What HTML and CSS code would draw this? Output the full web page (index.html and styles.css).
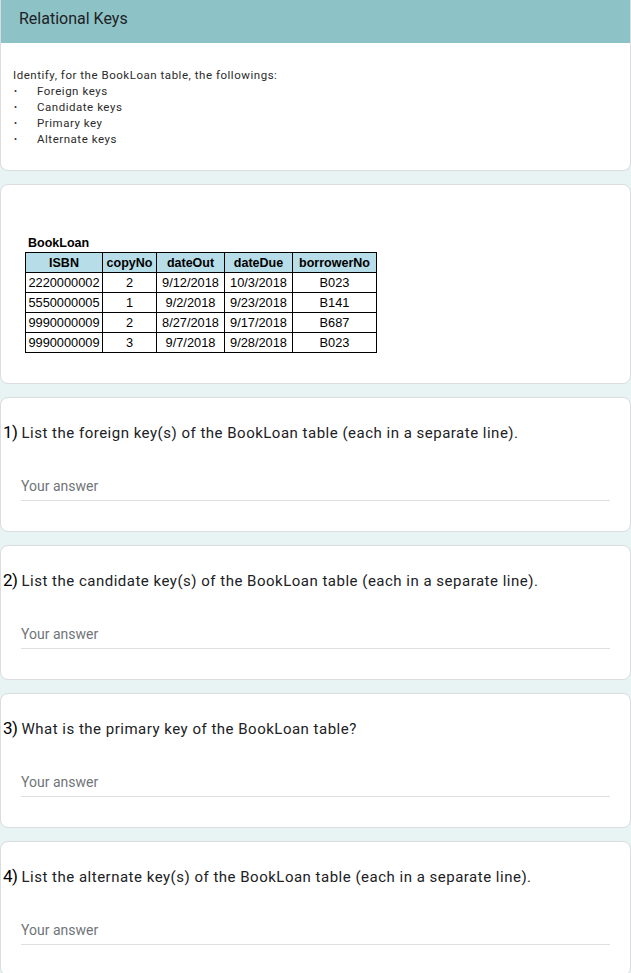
FILE: index.html
```html
<!DOCTYPE html>
<html lang="en">
<head>
<meta charset="utf-8">
<title>Relational Keys</title>
<link rel="stylesheet" href="styles.css">
</head>
<body>
<div class="page">
  <section class="card card-intro">
    <header class="intro-head"><h1 class="form-title">Relational Keys</h1></header>
    <div class="intro-body">
      <p class="intro-text">Identify, for the BookLoan table, the followings:</p>
      <ul class="intro-list">
        <li><span class="dot">•</span><span>Foreign keys</span></li>
        <li><span class="dot">•</span><span>Candidate keys</span></li>
        <li><span class="dot">•</span><span>Primary key</span></li>
        <li><span class="dot">•</span><span>Alternate keys</span></li>
      </ul>
    </div>
  </section>

  <section class="card card-table">
    <div class="sheet">
      <div class="sheet-title">BookLoan</div>
      <table class="sheet-table">
        <colgroup>
          <col class="c-isbn"><col class="c-copy"><col class="c-out"><col class="c-due"><col class="c-borrower">
        </colgroup>
        <thead>
          <tr><th>ISBN</th><th>copyNo</th><th>dateOut</th><th>dateDue</th><th>borrowerNo</th></tr>
        </thead>
        <tbody>
          <tr><td>2220000002</td><td>2</td><td>9/12/2018</td><td>10/3/2018</td><td>B023</td></tr>
          <tr><td>5550000005</td><td>1</td><td>9/2/2018</td><td>9/23/2018</td><td>B141</td></tr>
          <tr><td>9990000009</td><td>2</td><td>8/27/2018</td><td>9/17/2018</td><td>B687</td></tr>
          <tr><td>9990000009</td><td>3</td><td>9/7/2018</td><td>9/28/2018</td><td>B023</td></tr>
        </tbody>
      </table>
    </div>
  </section>

  <section class="card question">
    <div class="q-title"><span class="q-num">1)</span><span class="q-text">List the foreign key(s) of the BookLoan table (each in a separate line).</span></div>
    <div class="answer">Your answer</div>
  </section>

  <section class="card question">
    <div class="q-title"><span class="q-num">2)</span><span class="q-text">List the candidate key(s) of the BookLoan table (each in a separate line).</span></div>
    <div class="answer">Your answer</div>
  </section>

  <section class="card question">
    <div class="q-title"><span class="q-num">3)</span><span class="q-text">What is the primary key of the BookLoan table?</span></div>
    <div class="answer">Your answer</div>
  </section>

  <section class="card question">
    <div class="q-title"><span class="q-num">4)</span><span class="q-text">List the alternate key(s) of the BookLoan table (each in a separate line).</span></div>
    <div class="answer">Your answer</div>
  </section>
</div>
</body>
</html>
```

FILE: styles.css
```css
* { box-sizing: border-box; }

html, body {
  margin: 0;
  padding: 0;
}

body {
  background: #e8f3f3;
  font-family: Roboto, "Liberation Sans", Arial, sans-serif;
  color: #202124;
}

.page {
  display: flex;
  flex-direction: column;
  gap: 13px;
  width: 631px;
}

.card {
  background: #ffffff;
  border: 1px solid #dadce0;
  border-radius: 8px;
  overflow: hidden;
}

/* intro card */
.card-intro {
  border-top: none;
  border-radius: 0 0 8px 8px;
}

.intro-head {
  height: 43px;
  background: #8dc3c7;
  padding: 9px 19px 0;
  margin: 0 -1px;
}

.form-title {
  margin: 0;
  font-size: 16px;
  line-height: 20px;
  font-weight: 400;
  color: #202124;
}

.intro-body {
  padding: 24px 12px 23px;
  font-size: 11.5px;
  letter-spacing: 0.53px;
  line-height: 16px;
  color: #2b2b2b;
}

.intro-text {
  margin: 0;
}

.intro-list {
  list-style: none;
  margin: 0;
  padding: 0;
}

.intro-list li {
  display: flex;
}

.dot {
  width: 24px;
  padding-left: 1px;
  font-size: 9px;
}

/* table card */
.card-table {
  padding: 51px 24px 30px;
}

.sheet-title {
  font-family: "Liberation Sans", Arial, sans-serif;
  font-weight: 700;
  font-size: 12.5px;
  line-height: 15px;
  padding-left: 3px;
  margin-bottom: 1px;
  color: #000;
}

.sheet-table {
  border-collapse: collapse;
  table-layout: fixed;
  width: 351px;
  font-family: "Liberation Sans", Arial, sans-serif;
  font-size: 12.8px;
  color: #000;
}

.c-isbn { width: 77px; }
.c-copy { width: 54px; }
.c-out { width: 68px; }
.c-due { width: 68px; }
.c-borrower { width: 84px; }

.sheet-table th,
.sheet-table td {
  border: 1px solid #000;
  height: 20px;
  line-height: 18px;
  padding: 0;
  text-align: center;
  white-space: nowrap;
  overflow: hidden;
}

.sheet-table th {
  background: #b7dde8;
  font-weight: 700;
  font-size: 12.5px;
}

/* question cards */
.question {
  padding: 24px 20px 30px;
}

.q-title {
  display: flex;
  align-items: baseline;
  margin-left: -18px;
  line-height: 20px;
}

.q-num {
  font-size: 17px;
  letter-spacing: -0.5px;
  margin-right: 4px;
  color: #000;
}

.q-text {
  font-size: 15px;
  letter-spacing: 0.5px;
  color: #202124;
}

.answer {
  margin-top: 33px;
  font-size: 14px;
  line-height: 20px;
  padding-bottom: 4px;
  color: #70757a;
  border-bottom: 1px solid #e0e0e0;
}
```
